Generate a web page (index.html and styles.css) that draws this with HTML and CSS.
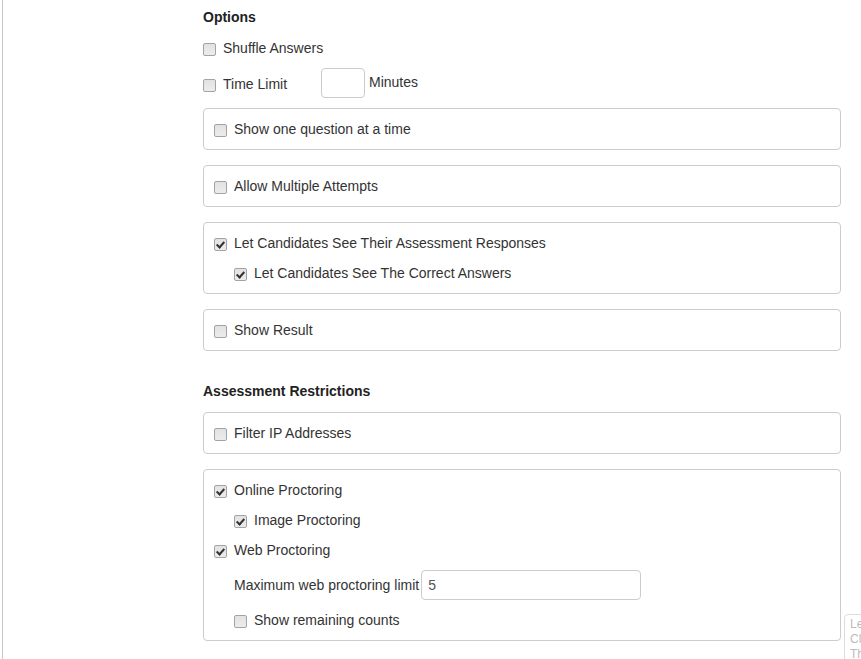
FILE: index.html
```html
<!DOCTYPE html>
<html lang="en">
<head>
<meta charset="utf-8">
<title>Assessment Settings</title>
<link rel="stylesheet" href="styles.css">
</head>
<body>
<div class="page">
  <div class="content">
    <section class="section">
      <h4 class="heading">Options</h4>
      <label class="check row-plain"><input type="checkbox"><span>Shuffle Answers</span></label>
      <div class="time-row">
        <label class="check time-label"><input type="checkbox"><span>Time Limit</span></label>
        <input class="small-input" type="text">
        <span class="unit">Minutes</span>
      </div>
      <div class="panel">
        <label class="check"><input type="checkbox"><span>Show one question at a time</span></label>
      </div>
      <div class="panel">
        <label class="check"><input type="checkbox"><span>Allow Multiple Attempts</span></label>
      </div>
      <div class="panel">
        <label class="check"><input type="checkbox" checked><span>Let Candidates See Their Assessment Responses</span></label>
        <label class="check indent"><input type="checkbox" checked><span>Let Candidates See The Correct Answers</span></label>
      </div>
      <div class="panel">
        <label class="check"><input type="checkbox"><span>Show Result</span></label>
      </div>
    </section>
    <section class="section">
      <h4 class="heading">Assessment Restrictions</h4>
      <div class="panel">
        <label class="check"><input type="checkbox"><span>Filter IP Addresses</span></label>
      </div>
      <div class="panel">
        <label class="check"><input type="checkbox" checked><span>Online Proctoring</span></label>
        <label class="check indent"><input type="checkbox" checked><span>Image Proctoring</span></label>
        <label class="check"><input type="checkbox" checked><span>Web Proctoring</span></label>
        <div class="limit-row indent">
          <span class="limit-label">Maximum web proctoring limit</span>
          <input class="limit-input" type="text" value="5">
        </div>
        <label class="check indent"><input type="checkbox"><span>Show remaining counts</span></label>
      </div>
    </section>
  </div>
  <div class="tip">Leave<br>Click<br>The</div>
</div>
</body>
</html>
```
FILE: styles.css
```css
html, body {
  margin: 0;
  padding: 0;
  overflow: hidden;
  background: #fff;
}
body {
  font-family: "Liberation Sans", Arial, sans-serif;
  font-size: 14px;
  line-height: 20px;
  color: #333;
}
.page {
  margin-left: 2px;
  border-left: 1px solid #c6c6c6;
  min-height: 659px;
  padding: 7px 0 0 200px;
  box-sizing: border-box;
}
.content {
  width: 638px;
}
.section + .section {
  padding-top: 15px;
}
.heading {
  margin: 0 0 11px;
  font-size: 14px;
  line-height: 20px;
  font-weight: bold;
  color: #222;
}
.check {
  display: flex;
  align-items: flex-start;
  margin-bottom: 10px;
  cursor: pointer;
}
.check:last-child {
  margin-bottom: 0;
}
.check input {
  -webkit-appearance: none;
  appearance: none;
  position: relative;
  flex: none;
  width: 13px;
  height: 13px;
  margin: 5px 7px 0 0;
  border: 1px solid #a3a3a3;
  border-radius: 2px;
  background: linear-gradient(#e2e2e2, #ececec);
  box-sizing: border-box;
}
.check input:checked::after {
  content: "";
  position: absolute;
  left: 3px;
  top: 1px;
  width: 3px;
  height: 6px;
  border-right: 2px solid #333;
  border-bottom: 2px solid #333;
  transform: rotate(42deg);
}
.indent {
  margin-left: 20px;
}
.time-row {
  display: flex;
  align-items: flex-start;
  height: 30px;
  margin-bottom: 10px;
}
.time-label {
  width: 118px;
  margin: 6px 0 0;
}
.small-input {
  width: 44px;
  height: 30px;
  margin: 0;
  border: 1px solid #ccc;
  border-radius: 4px;
  box-sizing: border-box;
  font: inherit;
}
.unit {
  margin: 4px 0 0 4px;
}
.panel {
  border: 1px solid #ccc;
  border-radius: 4px;
  padding: 10px;
  margin-bottom: 15px;
}
.limit-row {
  display: flex;
  align-items: flex-start;
  margin-bottom: 10px;
}
.limit-label {
  margin-top: 5px;
}
.limit-input {
  width: 220px;
  height: 30px;
  margin: 0 0 0 2px;
  padding: 0 6px;
  border: 1px solid #ccc;
  border-radius: 4px;
  box-sizing: border-box;
  font: inherit;
  color: #555;
}
.tip {
  position: absolute;
  left: 844px;
  top: 614px;
  width: 40px;
  height: 60px;
  padding: 2px 0 0 5px;
  border: 1px solid #ddd;
  border-radius: 4px;
  background: #fff;
  font-size: 12px;
  line-height: 15px;
  color: #bbb;
  white-space: nowrap;
  overflow: hidden;
}
```
